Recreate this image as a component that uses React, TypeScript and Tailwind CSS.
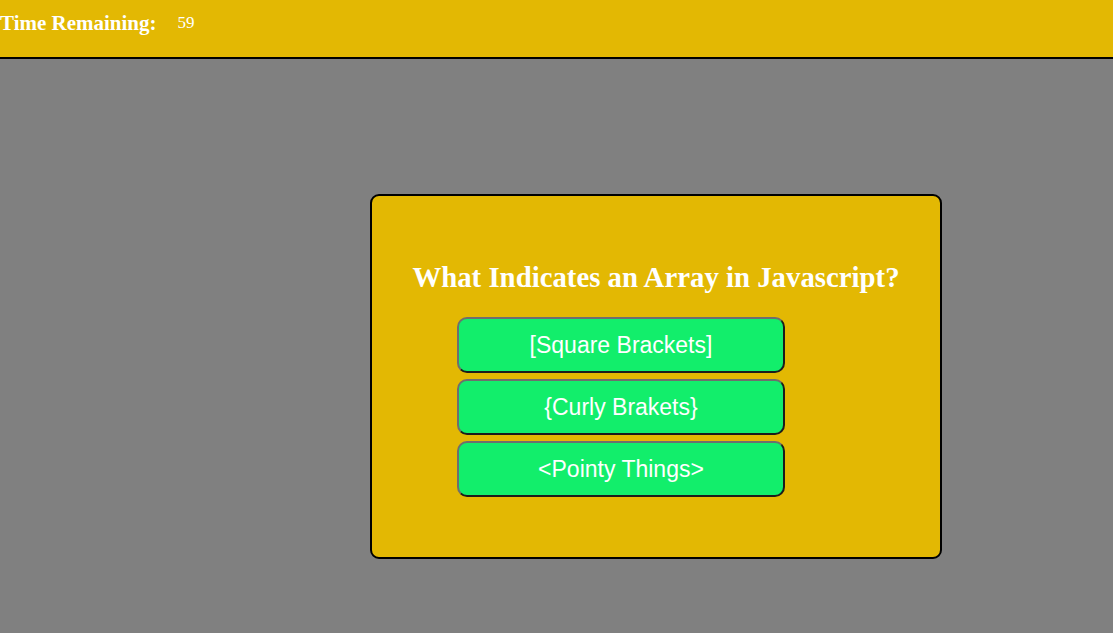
const answers = ["[Square Brackets]", "{Curly Brakets}", "<Pointy Things>"]

export default function App() {
  return (
    <div className="flex min-h-[633px] flex-col bg-[#808080] font-['Liberation_Serif',serif]">
      <header className="flex h-[59px] items-start border-b-2 border-black bg-[#e3b803] pt-[11px] text-white">
        <span className="text-[21px] font-bold leading-[24px]">Time Remaining:</span>
        <span className="mt-[1px] ml-[21px] text-[17px] leading-[22px]">59</span>
      </header>

      <main className="flex flex-1 justify-start pt-[135px] pl-[370px]">
        <section className="flex h-[365px] w-[572px] flex-col rounded-[9px] border-2 border-black bg-[#e3b803] pt-[63px]">
          <h2 className="text-center text-[28.8px] font-bold leading-[36px] text-white">
            What Indicates an Array in Javascript?
          </h2>
          <div className="mt-[22px] ml-[85px] flex w-[328px] flex-col gap-[6px]">
            {answers.map((a) => (
              <button
                key={a}
                className="h-[56px] rounded-[10px] border-2 border-t-[#6e6e6e] border-l-[#6e6e6e] border-r-[#1c1c1c] border-b-[#1c1c1c] bg-[#12ee6b] font-['Liberation_Sans',Arial,sans-serif] text-[23px] text-white"
              >
                {a}
              </button>
            ))}
          </div>
        </section>
      </main>
    </div>
  )
}
